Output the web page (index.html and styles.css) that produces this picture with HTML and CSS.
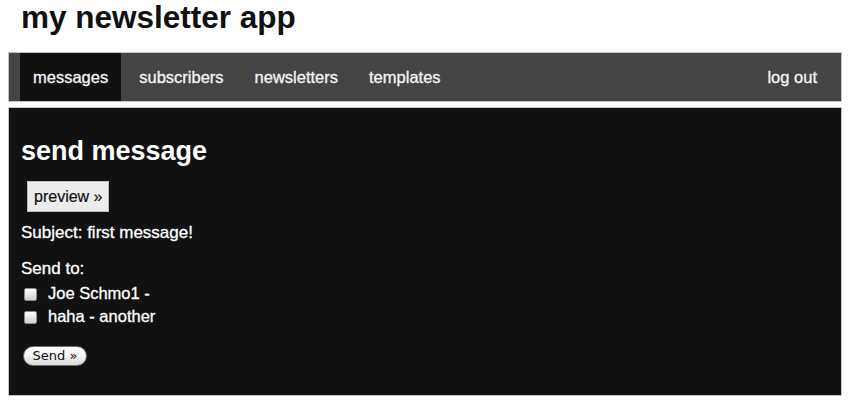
FILE: index.html
```html
<!DOCTYPE html>
<html>
<head>
<meta charset="utf-8">
<title>my newsletter app</title>
<link rel="stylesheet" href="styles.css">
</head>
<body>
<h1 class="title">my newsletter app</h1>
<nav class="nav">
  <a class="nav-item active" href="#">messages</a>
  <a class="nav-item" href="#">subscribers</a>
  <a class="nav-item" href="#">newsletters</a>
  <a class="nav-item" href="#">templates</a>
  <a class="nav-item logout" href="#">log out</a>
</nav>
<main class="panel">
  <h2 class="panel-title">send message</h2>
  <a class="preview-btn" href="#">preview &raquo;</a>
  <p class="subject">Subject: first message!</p>
  <form class="send-form">
    <p class="send-to">Send to:</p>
    <label class="row"><input class="check" type="checkbox"><span>Joe Schmo1 -</span></label>
    <label class="row"><input class="check" type="checkbox"><span>haha - another</span></label>
    <button class="send-btn" type="button">Send &raquo;</button>
  </form>
</main>
</body>
</html>
```
FILE: styles.css
```css
html, body {
  background: #fff;
}
body {
  margin: 0 8px;
  font-family: "Liberation Sans", Arial, Helvetica, sans-serif;
  color: #111;
}
.title {
  margin: 0 0 18px;
  padding-left: 13px;
  font-size: 31.5px;
  line-height: 34px;
  font-weight: bold;
  color: #111;
}
.nav {
  display: flex;
  gap: 5px;
  height: 48px;
  padding: 0 11px;
  background: #444;
  border: 1px solid #c4c4c4;
}
.nav-item {
  display: block;
  padding: 0 13px;
  line-height: 48px;
  font-size: 16.5px;
  color: #f4f4f4;
  text-decoration: none;
  -webkit-text-stroke: 0.3px #f4f4f4;
}
.nav-item.active {
  background: #111;
}
.nav-item.logout {
  margin-left: auto;
}
.panel {
  display: block;
  margin-top: 5px;
  padding: 27px 12px 29px;
  background: #111;
  border: 1px solid #c4c4c4;
  color: #fff;
}
.panel-title {
  margin: 0;
  font-size: 27px;
  line-height: 32px;
  font-weight: bold;
}
.preview-btn {
  display: inline-block;
  margin: 14px 0 0 6px;
  padding: 0 6px;
  line-height: 29px;
  font-size: 16px;
  color: #111;
  background: #ececec;
  border: 1px solid #bdbdbd;
  text-decoration: none;
  -webkit-text-stroke: 0.2px #111;
}
.subject {
  margin: 11px 0 0;
  font-size: 17px;
  line-height: 20px;
  -webkit-text-stroke: 0.3px #fff;
}
.send-form {
  margin: 0;
}
.send-to {
  margin: 16px 0 3px;
  font-size: 17px;
  line-height: 20px;
  -webkit-text-stroke: 0.3px #fff;
}
.row {
  display: flex;
  align-items: center;
  height: 23px;
  font-size: 16.5px;
  -webkit-text-stroke: 0.3px #fff;
}
.check {
  appearance: none;
  -webkit-appearance: none;
  box-sizing: border-box;
  width: 13px;
  height: 13px;
  margin: 1px 11px 0 3px;
  border: 1px solid #8a8a8a;
  border-radius: 2px;
  background: linear-gradient(#fdfdfd, #d0d0d0);
}
.send-btn {
  display: block;
  box-sizing: border-box;
  margin: 18px 0 0 2px;
  width: 64px;
  height: 20px;
  padding: 0;
  border: 1px solid #6f6f6f;
  border-radius: 10px;
  background: linear-gradient(#ffffff 0%, #f3f3f3 50%, #dadada 100%);
  font-family: "DejaVu Sans", "Lucida Grande", sans-serif;
  font-size: 13px;
  line-height: 18px;
  color: #111;
}
```
